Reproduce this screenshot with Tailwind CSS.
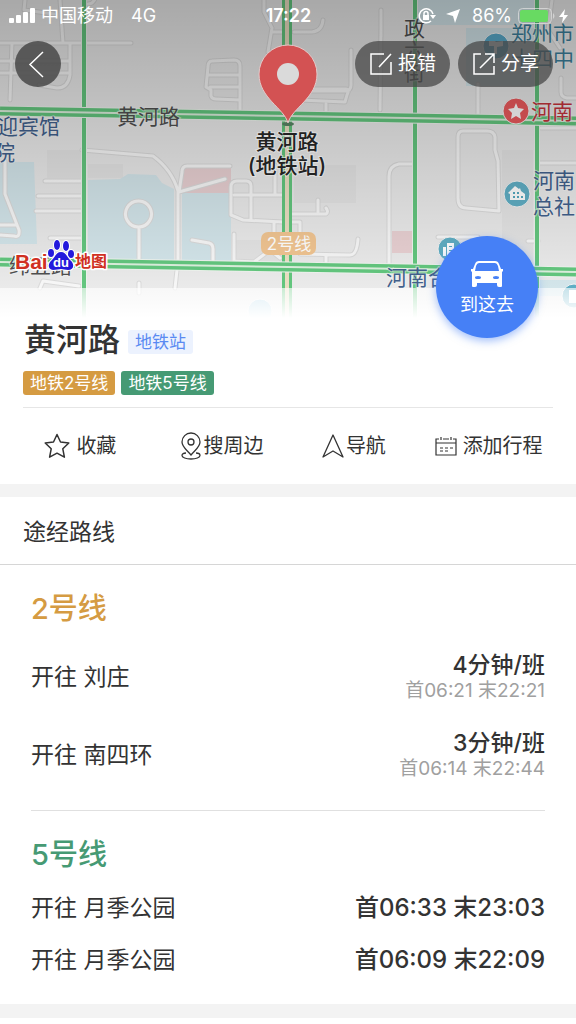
<!DOCTYPE html>
<html lang="zh-CN">
<head>
  <meta charset="UTF-8" />
  <meta name="viewport" content="width=device-width, initial-scale=1.0" />
  <title>黄河路(地铁站)</title>

  <script src="https://cdn.jsdelivr.net/npm/@tailwindcss/browser@4"></script>
</head>
<body class="bg-white text-[#333] font-['Inter','Noto_Sans_CJK_SC',sans-serif]">

  <header class="relative h-72">

    <!-- map -->
    <svg class="absolute top-0 left-0 w-full h-[322px]" viewBox="0 0 576 322" preserveAspectRatio="xMidYMin slice" aria-hidden="true">
      <defs>
        <linearGradient id="shade" x1="0" y1="0" x2="0" y2="1">
          <stop offset="0" stop-color="#000" stop-opacity="0.28" />
          <stop offset="1" stop-color="#000" stop-opacity="0" />
        </linearGradient>
        <path id="streets" d="M0 43h131M60 0l3 43M25 0l-1 10 30 4M12 43l-2 57M0 61h70M0 73h70M70 43v32q-2 13-13 13l-18-3M88 4q6 0 8-8M240 110V66q0-6-6-6l-22 1q-4 0-4 6l-2 20 5 3v6q1 3 5 3l24 1M209 75h31M210 87h30M264 0v12l8 16-4 24M272 32h10M82 150l71 6q19 14 25 35v70l-3 27M230 166h-43q-5 0-5 6l-3 20 46-13M45 181h36M38 196h43M36 211h45M50 238h31M5 161v33l14 36q1 8-5 6l-14-1M0 225h17M139 227v33M139 283v10M138 201a13 13 0 1 0 1 0zM192 240l17 3q4 1 4 6v12M231 196v-9q0-6 6-6h9q5 0 5 5v34M234 195h48M231 196v19l12 5 40 2M275 165v30M274 222v25M234 234v27l20 1 16-12 10 8M40 288l3-7 36 5M381 10v27M294 32h18q10-1 11-12M381 27l-1 83M351 50v35q0 6-6 6h-42M308 89h38q4 0 1 6l-2 7-45-2M326 104v8M458 150v48q0 10 8 10l33 3-1-50-3-11v-13q-1-6-8-6h-24q-5 0-5 6v14M412 164h-13q-10 2-10 12v88M288 214h38q3-2 0-6M318 200v12M288 222h12v28M300 254l50 1q7 0 8-16M326 255v7M438 237h40M478 84v30M561 78v14q0 5 6 6h9M541 128h35M537 163h39M528 241h10M552 0l-4 30 12 18" />
      </defs>
      <rect width="576" height="322" fill="#eaeaea" />

      <!-- blocks -->
      <path d="M47 150h34v28H47zM88 164h35v14H88zM235 240h48v24h-48zM294 165h62v38h-62zM502 150h31v115h-31z" fill="#e4e4e4" />
      <g fill="#d3e5ea">
        <path d="M0 162h34l3 82H0zM88 180l32-1 8-5 28 1 6 8 12 6v71H88zM182 192h49v70h-49z" />
        <path d="M416 0h123v25H416zM466 28h71v58h-71zM500 280h76v16h-76z" />
      </g>
      <path d="M184 168h47v25h-50zM392 231h22v22h-22z" fill="#e8d0d2" />

      <!-- small streets -->
      <g fill="none" stroke-linejoin="round" stroke-linecap="round">
        <use href="#streets" stroke="#dadada" stroke-width="5" />
        <use href="#streets" stroke="#f7f7f7" stroke-width="3" />
      </g>

      <!-- main roads with traffic -->
      <g fill="none">
        <path d="M84 0v322M415 0v322M537 0v322" stroke="#eef4ee" stroke-width="6" />
        <path d="M84 0v322M415 0v322M537 0v322" stroke="#63c67e" stroke-width="4" />
        <path d="M287 0v322" stroke="#63c67e" stroke-width="10" />
        <path d="M287 0v322" stroke="#eadfc2" stroke-width="4" />
        <path d="M0 111l288 5 288 5M0 262l288 5 288 5" stroke="#eef4ee" stroke-width="11" />
        <path d="M0 111l288 5 288 5M0 262l288 5 288 5" stroke="#63c67e" stroke-width="9" />
        <path d="M0 111l288 5 288 5M0 262l288 5 288 5" stroke="#dcefdd" stroke-width="2" />
      </g>

      <!-- place names -->
      <g font-size="21" fill="#4f4f4f" stroke="#f2f2f2" stroke-opacity="0.6" stroke-width="2" paint-order="stroke">
        <text x="117" y="124">黄河路</text>
        <text x="404" y="36">政</text>
        <text x="404" y="58">六</text>
        <text x="404" y="80">街</text>
        <text x="9" y="273">纬五路</text>
        <g fill="#41608c">
          <text x="-3" y="134">迎宾馆</text>
          <text x="-6" y="160">院</text>
          <text x="533" y="188">河南</text>
          <text x="533" y="214">总社</text>
          <text x="386" y="285">河南合</text>
        </g>
        <g fill="#3b7f9b">
          <text x="511" y="41">郑州市</text>
          <text x="511" y="66">十四中</text>
        </g>
        <text x="531" y="119" fill="#c4343c">河南</text>
      </g>

      <!-- place markers -->
      <g stroke="#f4f4f4" stroke-width="1">
        <circle cx="496" cy="46" r="13" fill="#57a9c9" />
        <circle cx="516" cy="111" r="13" fill="#ec5a5d" />
        <circle cx="517" cy="194" r="13" fill="#60aec4" />
        <circle cx="450" cy="249" r="12" fill="#60aec4" />
        <circle cx="574" cy="296" r="12" fill="#60aec4" />
        <circle cx="260" cy="311" r="12" fill="#a5d2e4" />
      </g>
      <g fill="#fff">
        <path d="M489 41h6l1 1 7-1v5l-6 1v7h-3v-8h-5z" />
        <path d="M516 103l2 5 6 1-4 4 1 6-5-3-5 3 1-6-4-4 6-1z" />
        <path d="M508 193l7-7 4 3 1-1 1 3 4 3v6h-15v-6z" />
        <path d="M447 243h7v13h-7zM443 247h3v9h-3zM569 290h7v13h-7z" />
      </g>
      <path d="M513 192h2v2h-2zM517 192h2v2h-2zM513 196h2v2h-2zM517 196h2v2h-2zM521 196h2v2h-2zM449 246h3v1h-3zM449 250h3v1h-3z" fill="#56a8bf" />

      <!-- line badge -->
      <rect x="261" y="232" width="55" height="23" rx="7" fill="#f1c592" />
      <text x="289" y="250" font-size="17" text-anchor="middle" fill="#fff">2号线</text>

      <rect width="576" height="288" fill="url(#shade)" />

      <!-- selected pin -->
      <ellipse cx="288" cy="124" rx="6" ry="2" fill="#4b7055" />
      <path d="M288 123C284 108 259 98 259 74a29 29 0 0 1 58 0C317 98 292 108 288 123z" fill="#d35253" stroke="#e3c9c9" stroke-width="1" />
      <circle cx="288" cy="74" r="11" fill="#dadada" />
      <g font-size="21" font-weight="500" text-anchor="middle" fill="#222" stroke="#e6e6e6" stroke-opacity="0.7" stroke-width="2" paint-order="stroke">
        <text x="287" y="149">黄河路</text>
        <text x="287" y="173">(地铁站)</text>
      </g>
    </svg>

    <!-- status bar -->
    <div class="relative grid grid-cols-[1fr_auto_1fr] items-center h-8 pl-[9px] pr-2 text-white text-lg leading-8">
      <div class="flex items-center">
        <svg class="w-[26px] h-4 mr-[6px]" viewBox="0 0 26 16" fill="currentColor" aria-hidden="true">
          <rect x="0" y="10" width="5" height="5" rx="1" />
          <rect x="7" y="7" width="5" height="8" rx="1" />
          <rect x="14" y="4" width="5" height="11" rx="1" />
          <rect x="21" y="0" width="5" height="15" rx="1" />
        </svg>
        <span>中国移动</span>
        <span class="ml-[18px]">4G</span>
      </div>
      <span class="font-semibold">17:22</span>
      <div class="flex items-center justify-end">
        <svg class="w-[18px] h-[18px] mr-[10px]" viewBox="0 0 18 18" fill="none" stroke="currentColor" stroke-width="1.5" aria-hidden="true">
          <path d="M13 14A7 7 0 1 1 15 7" />
          <path d="M12 8h6l-3 4z" fill="currentColor" stroke="none" />
          <rect x="5" y="8" width="6" height="5" fill="currentColor" stroke="none" />
          <path d="M6 8V6.500a2 2 0 0 1 4 0V8" />
        </svg>
        <svg class="w-[14px] h-[14px] mr-3" viewBox="0 0 14 14" fill="currentColor" aria-hidden="true">
          <path d="M14 0L9 14 7 7 0 5z" />
        </svg>
        <span>86%</span>
        <svg class="w-[37px] h-4 ml-[6px]" viewBox="0 0 37 16" aria-hidden="true">
          <rect x="0.500" y="0.500" width="33" height="15" rx="4" fill="none" stroke="#e3e3e3" stroke-opacity="0.7" />
          <rect x="2" y="2" width="28" height="12" rx="2" fill="#68da62" />
          <path d="M35 5q3 3 0 6z" fill="#e3e3e3" fill-opacity="0.7" />
        </svg>
        <svg class="w-[9px] h-[14px] ml-1" viewBox="0 0 9 14" fill="currentColor" aria-hidden="true">
          <path d="M6 0L0 8h4l-1 6 6-8H5z" />
        </svg>
      </div>
    </div>

    <!-- map buttons -->
    <div class="relative flex items-center gap-2 pt-[9px] pl-[15px] pr-[23px] text-white">
      <button type="button" aria-label="返回" class="mr-auto flex items-center justify-center w-[46px] h-[46px] rounded-full bg-[#484848]/85">
        <svg class="w-[46px] h-[46px]" viewBox="0 0 46 46" fill="none" stroke="currentColor" stroke-width="1.500" aria-hidden="true">
          <path d="M28 11L15 23.500 28 36" />
        </svg>
      </button>
      <button type="button" class="flex items-center justify-center gap-[5px] w-[95px] h-[46px] rounded-full bg-[#484848]/75 text-[19px]">
        <svg class="w-6 h-6 shrink-0" viewBox="0 0 24 24" fill="none" stroke="currentColor" stroke-width="1.500" aria-hidden="true">
          <path d="M15 2H2v20h20V10M10 15L22 2" />
        </svg>
        报错
      </button>
      <button type="button" class="flex items-center justify-center gap-[5px] w-[95px] h-[46px] rounded-full bg-[#484848]/75 text-[19px]">
        <svg class="w-6 h-6 shrink-0" viewBox="0 0 24 24" fill="none" stroke="currentColor" stroke-width="1.500" aria-hidden="true">
          <path d="M9 2H2v20h20v-8M8 16L22 2M13 2h9v9" />
        </svg>
        分享
      </button>
    </div>

    <!-- map provider logo -->
    <svg class="absolute left-3 bottom-[14px] w-[97px] h-9" viewBox="0 0 97 36" role="img" aria-label="Baidu地图">
      <g fill="#d03022" stroke="#fff" stroke-width="3" paint-order="stroke" stroke-linejoin="round" font-weight="700">
        <text x="3" y="31" font-size="21" font-family="Liberation Sans, sans-serif">Bai</text>
        <text x="63" y="29" font-size="16" font-family="Noto Sans CJK SC, sans-serif">地图</text>
      </g>
      <g fill="#2319dc" stroke="#fff" stroke-width="2" paint-order="stroke">
        <ellipse cx="39" cy="15" rx="3" ry="4" />
        <ellipse cx="45" cy="7" rx="3" ry="5" />
        <ellipse cx="54" cy="8" rx="3" ry="5" />
        <ellipse cx="59" cy="16" rx="3" ry="4" />
        <path d="M49 14c5 0 6 5 9 8 5 4 4 10-2 10-3 0-5-1-7-1s-5 1-8 1c-6-1-5-7-1-10 4-4 4-8 9-8z" />
      </g>
      <text x="49" y="29" text-anchor="middle" font-size="13" font-weight="700" font-family="Liberation Sans, sans-serif" fill="#fff">du</text>
    </svg>
  </header>

  <main class="relative">

    <!-- floating route button -->
    <button type="button" class="absolute right-[38px] -top-[52px] z-10 flex flex-col items-center w-[102px] h-[102px] pt-[25px] rounded-full bg-[#4680f6] text-white text-lg leading-7 shadow-[0_3px_9px_rgba(70,128,246,0.5)]">
      <svg class="w-8 h-[26px] mb-1 shrink-0" viewBox="0 0 32 26" fill="currentColor" fill-rule="evenodd" aria-hidden="true">
        <path d="M8 0h16q3 0 4 3l2 5h2v2l-1 1v14q0 1-1 1h-2q-2 0-2-2v-2H6v2q0 2-2 2H2q-1 0-1-1V11L0 10V8h2l2-5q1-3 4-3zM8 2Q6 2 5 5l-1 5h24l-1-5q-1-3-3-3zM4 16.500a3 1.500 0 1 0 6 0 3 1.500 0 1 0-6 0zM22 16.500a3 1.500 0 1 0 6 0 3 1.500 0 1 0-6 0z" />
      </svg>
      到这去
    </button>

    <section class="px-[23px] pt-7 bg-[linear-gradient(to_bottom,rgba(255,255,255,0.65),#fff_30px)]">
      <div class="flex items-center gap-2 pl-px">
        <h1 class="text-[32px] leading-[48px] font-medium">黄河路</h1>
        <span class="mt-1 px-[7px] rounded-[3px] bg-[#ecf2fe] text-[#5a8af2] text-[17px] leading-6">地铁站</span>
      </div>
      <div class="flex gap-[6px] mt-[7px] pb-3 border-b border-[#e6e6e6] text-white text-[17px] leading-6">
        <span class="px-[7px] rounded-[3px] bg-[#d59b42]">地铁2号线</span>
        <span class="px-[7px] rounded-[3px] bg-[#469a74]">地铁5号线</span>
      </div>
    </section>

    <!-- actions -->
    <div class="grid grid-cols-[137fr_146fr_119fr_151fr] h-[76px] px-3 text-xl">
      <button type="button" class="flex items-center justify-center gap-[6px]">
        <svg class="w-[26px] h-[26px]" viewBox="0 0 26 26" fill="none" stroke="currentColor" stroke-width="1.500" stroke-linejoin="round" aria-hidden="true">
          <path d="M13 1.500l3.500 7.500 8.300 1-6 5.800 1.600 8.400L13 20.200 5.600 24.200l1.600-8.400-6-5.800 8.300-1z" />
        </svg>
        收藏
      </button>
      <button type="button" class="flex items-center justify-center gap-[2px]">
        <svg class="w-[22px] h-7" viewBox="0 0 22 28" fill="none" stroke="currentColor" stroke-width="1.300" aria-hidden="true">
          <path d="M11 23C7 18 2 15 2 10a9 9 0 0 1 18 0c0 5-5 8-9 13z" />
          <circle cx="11" cy="10" r="3" />
          <path d="M6 21c-3 0-4 1-4 2.500C2 25.500 6 27 11 27s9-1.500 9-3.500C20 22 19 21 16 21" />
        </svg>
        搜周边
      </button>
      <button type="button" class="flex items-center justify-center gap-[2px]">
        <svg class="w-[22px] h-6" viewBox="0 0 22 24" fill="none" stroke="currentColor" stroke-width="1.300" stroke-linejoin="round" aria-hidden="true">
          <path d="M11 1l10 22-10-6-10 6z" />
        </svg>
        导航
      </button>
      <button type="button" class="flex items-center justify-center gap-[6px]">
        <svg class="w-[22px] h-5" viewBox="0 0 22 20" fill="none" stroke="currentColor" stroke-width="1.200" aria-hidden="true">
          <path d="M4 3H1v16h20V3h-3M8 3h6M1 7h20M6 1v3M16 1v3" />
          <path d="M5 12h3M10 12h3M15 12h3M5 15h3M10 15h3" />
        </svg>
        添加行程
      </button>
    </div>

    <section class="border-t-[13px] border-[#f3f3f3]">
      <h2 class="px-[23px] pt-[3px] border-b border-[#d6d6d6] text-[23px] leading-[64px]">途经路线</h2>

      <div class="mx-[31px] pt-6 pb-[29px] border-b border-[#e0e0e0] text-[23px]">
        <h3 class="text-[29px] leading-10 font-medium text-[#d59b42]">2号线</h3>
        <ul class="mt-[22px] flex flex-col gap-[26px]">
          <li class="flex items-center justify-between h-[52px]">
            <span>开往 刘庄</span>
            <div class="text-right">
              <p class="leading-7 font-medium">4分钟/班</p>
              <p class="text-[19px] leading-6 text-[#a0a0a0]">首06:21 末22:21</p>
            </div>
          </li>
          <li class="flex items-center justify-between h-[52px]">
            <span>开往 南四环</span>
            <div class="text-right">
              <p class="leading-7 font-medium">3分钟/班</p>
              <p class="text-[19px] leading-6 text-[#a0a0a0]">首06:14 末22:44</p>
            </div>
          </li>
        </ul>
      </div>

      <div class="mx-[31px] pt-6 pb-[18px] text-[23px]">
        <h3 class="text-[29px] leading-10 font-medium text-[#469a74]">5号线</h3>
        <ul class="mt-[7px]">
          <li class="flex items-center justify-between h-[52px]">
            <span>开往 月季公园</span>
            <span class="text-2xl font-medium">首06:33 末23:03</span>
          </li>
          <li class="flex items-center justify-between h-[52px]">
            <span>开往 月季公园</span>
            <span class="text-2xl font-medium">首06:09 末22:09</span>
          </li>
        </ul>
      </div>
    </section>
  </main>

  <footer class="h-[14px] bg-[#f3f3f3]"></footer>

</body>
</html>
